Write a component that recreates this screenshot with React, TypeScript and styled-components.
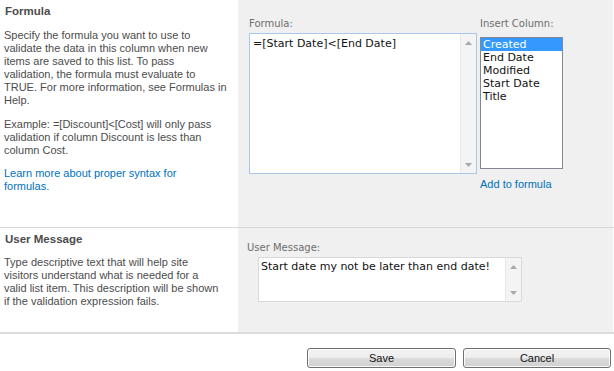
import React from 'react';
import styled, { createGlobalStyle } from 'styled-components';

const GlobalStyle = createGlobalStyle`
  body {
    margin: 0;
    background: #fff;
  }
`;

const COLUMNS = ['Created', 'End Date', 'Modified', 'Start Date', 'Title'];

// description texts keep the line breaks of the original form
const FORMULA_HELP = [
  'Specify the formula you want to use to',
  'validate the data in this column when new',
  'items are saved to this list. To pass',
  'validation, the formula must evaluate to',
  'TRUE. For more information, see Formulas in',
  'Help.',
].join('\n');

const FORMULA_EXAMPLE = [
  'Example: =[Discount]<[Cost] will only pass',
  'validation if column Discount is less than',
  'column Cost.',
].join('\n');

const SYNTAX_LINK = ['Learn more about proper syntax for', 'formulas.'].join('\n');

const MESSAGE_HELP = [
  'Type descriptive text that will help site',
  'visitors understand what is needed for a',
  'valid list item. This description will be shown',
  'if the validation expression fails.',
].join('\n');

const ArrowUp = () => (
  <svg width="7" height="4" viewBox="0 0 7 4">
    <polygon points="0,4 3.5,0 7,4" fill="#a8a8a8" />
  </svg>
);

const ArrowDown = () => (
  <svg width="7" height="4" viewBox="0 0 7 4">
    <polygon points="0,0 7,0 3.5,4" fill="#a8a8a8" />
  </svg>
);

const TextBox: React.FC<{ width: number; height: number; focused?: boolean; pad: string; children: React.ReactNode }> = ({
  width,
  height,
  focused,
  pad,
  children,
}) => (
  <SBox $width={width} $height={height} $focused={focused}>
    <SBoxText $pad={pad}>{children}</SBoxText>
    <SScrollbar>
      <ArrowUp />
      <ArrowDown />
    </SScrollbar>
  </SBox>
);

const App: React.FC = () => (
  <SPage>
    <GlobalStyle />
    <SSection $height={227} $border="1px solid #d8d8d8">
      <SDescription>
        <SHeading>Formula</SHeading>
        <SText>{FORMULA_HELP}</SText>
        <SText $gap={11}>{FORMULA_EXAMPLE}</SText>
        <SLink $gap={10} href="#">
          {SYNTAX_LINK}
        </SLink>
      </SDescription>
      <SFields $top={18} $left={11}>
        <SFieldColumn>
          <SFieldLabel $gap={3}>Formula:</SFieldLabel>
          <TextBox width={228} height={141} focused pad="3px 3px">
            =[Start Date]&lt;[End Date]
          </TextBox>
        </SFieldColumn>
        <SFieldColumn $left={3}>
          <SFieldLabel $gap={7}>Insert Column:</SFieldLabel>
          <SListBox>
            {COLUMNS.map((name, i) => (
              <SListItem key={name} $selected={i === 0}>
                {name}
              </SListItem>
            ))}
          </SListBox>
          <SLink $gap={9} href="#">
            Add to formula
          </SLink>
        </SFieldColumn>
      </SFields>
    </SSection>

    <SSection $height={104} $border="2px solid #dcdcdc">
      <SDescription>
        <SHeading $gap={10}>User Message</SHeading>
        <SText>{MESSAGE_HELP}</SText>
      </SDescription>
      <SFields $top={14} $left={9}>
        <SFieldColumn>
          <SFieldLabel $gap={3}>User Message:</SFieldLabel>
          <SIndent>
            <TextBox width={264} height={45} pad="2px 2px">
              Start date my not be later than end date!
            </TextBox>
          </SIndent>
        </SFieldColumn>
      </SFields>
    </SSection>

    <SButtonRow>
      <SButton $width={149}>Save</SButton>
      <SButton $width={148}>Cancel</SButton>
    </SButtonRow>
  </SPage>
);

const SPage = styled.div`
  width: 614px;
  font-family: 'Liberation Sans', Arial, sans-serif;
  font-size: 11px;
  color: #4c4c4c;
`;

const SSection = styled.div<{ $height: number; $border: string }>`
  display: grid;
  grid-template-columns: 238px 1fr;
  height: ${(p) => p.$height}px;
  border-bottom: ${(p) => p.$border};
`;

const SDescription = styled.div`
  padding: 5px 6px 0 4px;
  display: flex;
  flex-direction: column;
  align-items: flex-start;
`;

const SHeading = styled.h3<{ $gap?: number }>`
  margin: 0 0 ${(p) => p.$gap ?? 11}px 1px;
  font-size: 11.5px;
  line-height: 13px;
  font-weight: bold;
  color: #4c4c4c;
`;

const SText = styled.p<{ $gap?: number }>`
  margin: ${(p) => p.$gap ?? 0}px 0 0;
  line-height: 13px;
  white-space: pre-line;
`;

const SLink = styled.a<{ $gap?: number }>`
  display: block;
  margin-top: ${(p) => p.$gap ?? 0}px;
  line-height: 13px;
  color: #0072bc;
  text-decoration: none;
  white-space: pre-line;
`;

const SFields = styled.div<{ $top: number; $left: number }>`
  display: flex;
  align-items: flex-start;
  background: #f0f0f0;
  margin-right: 1px;
  padding: ${(p) => p.$top}px 0 0 ${(p) => p.$left}px;
`;

const SFieldColumn = styled.div<{ $left?: number }>`
  display: flex;
  flex-direction: column;
  margin-left: ${(p) => p.$left ?? 0}px;
`;

const SFieldLabel = styled.label<{ $gap: number }>`
  margin-bottom: ${(p) => p.$gap}px;
  font-family: 'DejaVu Sans', Verdana, sans-serif;
  font-size: 10px;
  line-height: 12px;
  color: #6e6e6e;
`;

const SIndent = styled.div`
  padding-left: 11px;
`;

const SBox = styled.div<{ $width: number; $height: number; $focused?: boolean }>`
  box-sizing: border-box;
  display: flex;
  width: ${(p) => p.$width}px;
  height: ${(p) => p.$height}px;
  background: #fff;
  border: 1px solid ${(p) => (p.$focused ? '#a9c7e6' : '#d9d9d9')};
`;

const SBoxText = styled.div<{ $pad: string }>`
  flex: 1;
  padding: ${(p) => p.$pad};
  font-family: 'DejaVu Sans', Verdana, sans-serif;
  font-size: 11px;
  line-height: 13px;
  color: #111;
  white-space: nowrap;
`;

const SScrollbar = styled.div`
  width: 15px;
  display: flex;
  flex-direction: column;
  align-items: center;
  justify-content: space-between;
  padding: 7px 0 6px;
  background: #f4f4f4;
  border-left: 1px solid #e8e8e8;
`;

const SListBox = styled.div`
  box-sizing: border-box;
  width: 83px;
  height: 132px;
  background: #fff;
  border: 1px solid #828790;
  font-family: 'DejaVu Sans', Verdana, sans-serif;
  font-size: 11px;
  line-height: 13px;
  color: #111;
`;

const SListItem = styled.div<{ $selected?: boolean }>`
  padding-left: 2px;
  background: ${(p) => (p.$selected ? '#3399ff' : 'transparent')};
  color: ${(p) => (p.$selected ? '#fff' : '#111')};
`;

const SButtonRow = styled.div`
  display: flex;
  justify-content: flex-end;
  gap: 7px;
  padding: 14px 3px 0 0;
`;

const SButton = styled.button<{ $width: number }>`
  box-sizing: border-box;
  width: ${(p) => p.$width}px;
  height: 20px;
  padding: 0;
  border: 1px solid #707070;
  border-radius: 3px;
  background: linear-gradient(#f4f4f4 0%, #ececec 50%, #dcdcdc 50%, #d0d0d0 100%);
  box-shadow: inset 0 0 0 1px #fbfbfb;
  font-family: 'Liberation Sans', Arial, sans-serif;
  font-size: 11px;
  color: #111;
`;

export default App;
